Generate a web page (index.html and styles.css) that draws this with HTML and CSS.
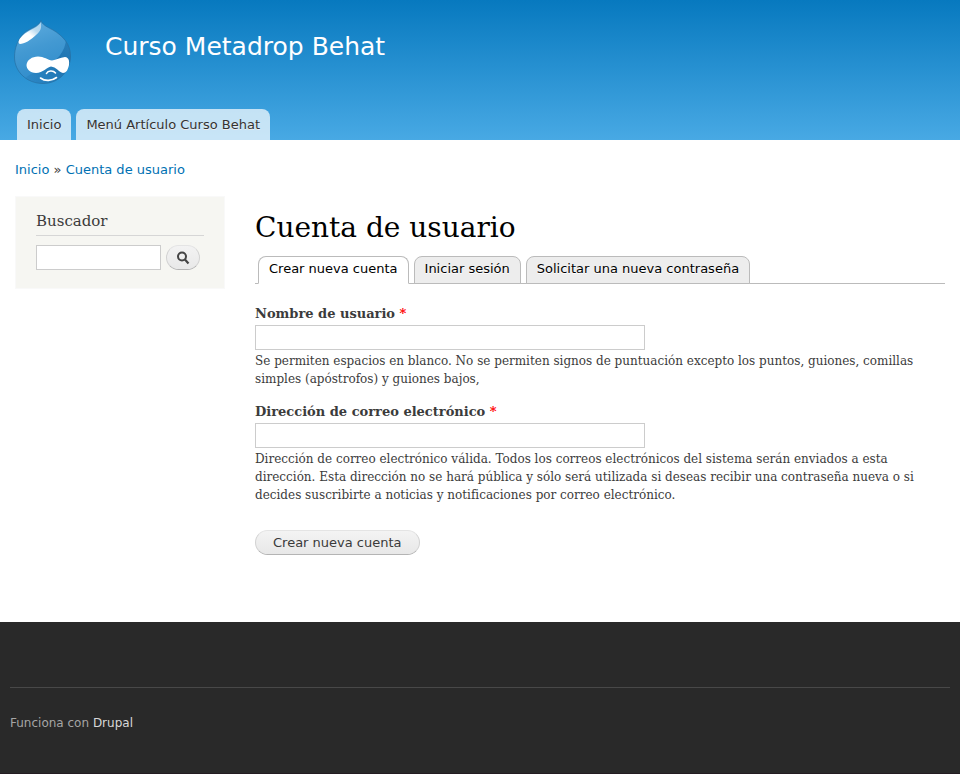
FILE: index.html
```html
<!DOCTYPE html>
<html lang="es">
<head>
<meta charset="utf-8">
<meta name="viewport" content="width=device-width, initial-scale=1">
<title>Cuenta de usuario | Curso Metadrop Behat</title>
<link rel="stylesheet" href="styles.css">
</head>
<body>
<header class="site-header">
  <div class="branding">
    <a class="logo" href="#" aria-label="Inicio">
      <svg width="58" height="65" viewBox="0 0 58 65" aria-hidden="true">
        <defs>
          <linearGradient id="drop" x1="0" y1="0" x2="0.3" y2="1">
            <stop offset="0" stop-color="#62aee0"/>
            <stop offset="0.5" stop-color="#4399d2"/>
            <stop offset="1" stop-color="#2f8ccb"/>
          </linearGradient>
          <linearGradient id="dark" x1="1" y1="0" x2="0" y2="1">
            <stop offset="0" stop-color="#1b70ad" stop-opacity="0.6"/>
            <stop offset="0.4" stop-color="#1b70ad" stop-opacity="0.85"/>
            <stop offset="1" stop-color="#1b70ad" stop-opacity="0.1"/>
          </linearGradient>
          <linearGradient id="shine" x1="1" y1="0" x2="0.2" y2="1">
            <stop offset="0" stop-color="#ffffff" stop-opacity="0.5"/>
            <stop offset="0.35" stop-color="#ffffff" stop-opacity="0.6"/>
            <stop offset="0.6" stop-color="#ffffff"/>
            <stop offset="1" stop-color="#ffffff"/>
          </linearGradient>
          <clipPath id="drop-clip">
            <path d="M27 .5C28 4 31 6 39 10C49 16 56.500 24 56.500 36C56.500 52 44 63.500 29 63.500C13 63.500 .5 52 .5 37C.5 28 4 19 10 13C16 8 26 6 27 .5Z"/>
          </clipPath>
        </defs>
        <path fill="url(#drop)" d="M27 .5C28 4 31 6 39 10C49 16 56.500 24 56.500 36C56.500 52 44 63.500 29 63.500C13 63.500 .5 52 .5 37C.5 28 4 19 10 13C16 8 26 6 27 .5Z"/>
        <g clip-path="url(#drop-clip)">
          <path fill="url(#dark)" d="M52 18C52 32 42 42 28 49C20 52 14 55 10 59L30 65L58 60V20Z"/>
        </g>
        <path fill="none" stroke="#256a9c" stroke-opacity=".6" d="M27 .5C28 4 31 6 39 10C49 16 56.500 24 56.500 36C56.500 52 44 63.500 29 63.500C13 63.500 .5 52 .5 37C.5 28 4 19 10 13C16 8 26 6 27 .5Z"/>
        <path fill="url(#shine)" d="M26.500 2C28 7 27 11 22 15C17 20 10 24 6 24C3 23 5 18 11 13.500C17 9 25 7 26.500 2Z"/>
        <path fill="#fff" d="M24 36.500C30 36.500 34 40 38 40.500C42 40 46 37.500 51 37C55 37.500 55.500 41 55 45C54 50 52 53 49 53C45 52 42 47 37 46.500C33 47 29 53 22 53C16 53 12.500 49 12.500 45C13 40 18 36.500 24 36.500Z"/>
        <path fill="none" stroke="#fff" stroke-width="1.600" stroke-linecap="round" d="M32.500 53.500C34 50.500 39 50 41.500 53M26.500 58C31 61.500 38 61 42.500 57.500"/>
      </svg>
    </a>
    <a class="site-name" href="#">Curso Metadrop Behat</a>
  </div>
  <nav class="main-menu" aria-label="Menú principal">
    <a href="#">Inicio</a>
    <a href="#">Menú Artículo Curso Behat</a>
  </nav>
</header>
<div class="page">
  <nav class="breadcrumb" aria-label="Ruta"><a href="#">Inicio</a> » <a href="#">Cuenta de usuario</a></nav>
  <div class="columns">
    <aside class="sidebar">
      <h2>Buscador</h2>
      <form class="search" role="search">
        <input type="text" aria-label="Buscar">
        <button class="button" type="button" aria-label="Buscar">
          <svg width="14" height="14" viewBox="0 0 14 14" fill="none" stroke="#444" aria-hidden="true">
            <circle cx="6" cy="5.500" r="4" stroke-width="2"/>
            <path d="M8.500 8l4 4.500" stroke-width="2.200"/>
          </svg>
        </button>
      </form>
    </aside>
    <main class="content">
      <h1>Cuenta de usuario</h1>
      <nav class="tabs" aria-label="Solapas principales">
        <a class="active" href="#" aria-current="page">Crear nueva cuenta</a>
        <a href="#">Iniciar sesión</a>
        <a href="#">Solicitar una nueva contraseña</a>
      </nav>
      <form class="account">
        <div class="field">
          <label for="name">Nombre de usuario <span class="required">*</span></label>
          <input id="name" type="text" aria-describedby="name-help">
          <p id="name-help">Se permiten espacios en blanco. No se permiten signos de puntuación excepto los puntos, guiones, comillas simples (apóstrofos) y guiones bajos,</p>
        </div>
        <div class="field">
          <label for="mail">Dirección de correo electrónico <span class="required">*</span></label>
          <input id="mail" type="text" aria-describedby="mail-help">
          <p id="mail-help">Dirección de correo electrónico válida. Todos los correos electrónicos del sistema serán enviados a esta dirección. Esta dirección no se hará pública y sólo será utilizada si deseas recibir una contraseña nueva o si decides suscribirte a noticias y notificaciones por correo electrónico.</p>
        </div>
        <button class="button submit" type="button">Crear nueva cuenta</button>
      </form>
    </main>
  </div>
</div>
<footer class="site-footer">
  <p>Funciona con <a href="#">Drupal</a></p>
</footer>
</body>
</html>
```
FILE: styles.css
```css
* {
  box-sizing: border-box;
}

body {
  margin: 0;
  min-height: 100vh;
  display: flex;
  flex-direction: column;
  background: #292929;
  color: #3b3b3b;
  font: 13px/20px "DejaVu Sans", Verdana, sans-serif;
}

a {
  color: #0071b3;
  text-decoration: none;
}

h1,
h2,
p {
  margin: 0;
}

.site-header {
  padding: 20px 14px 0;
  background: linear-gradient(#0779bf, #48a9e4);
}

.branding {
  display: flex;
  align-items: flex-start;
  gap: 33px;
}

.logo svg {
  display: block;
}

.site-name {
  padding-top: 11px;
  color: #fffeff;
  font-size: 25px;
  line-height: 32px;
}

.main-menu {
  display: flex;
  gap: 5px;
  padding: 24px 3px 0;
}

.main-menu a {
  padding: 6px 10px 5px;
  border-radius: 8px 8px 0 0;
  background: rgba(255, 255, 255, 0.7);
  color: #333;
  text-shadow: 0 1px #eee;
}

.page {
  padding: 20px 15px 67px;
  background: #fff;
}

.columns {
  display: flex;
  align-items: flex-start;
  gap: 30px;
  margin-top: 16px;
}

.sidebar {
  flex: 0 0 210px;
  padding: 14px 20px 18px;
  border: 1px solid #f9f9f9;
  background: #f6f6f2;
}

.sidebar h2 {
  padding-bottom: 4px;
  border-bottom: 1px solid #d6d6d6;
  font: 15px/20px "DejaVu Serif", Georgia, serif;
}

.search {
  display: flex;
  gap: 5px;
  margin-top: 9px;
}

input {
  height: 25px;
  padding: 2px 4px;
  border: 1px solid #ccc;
  border-radius: 0;
  background: #fff;
  color: #3b3b3b;
  font: inherit;
}

.search input {
  width: 125px;
}

.button {
  height: 25px;
  padding: 0 17px;
  border: 1px solid #e4e4e4;
  border-bottom-color: #b4b4b4;
  border-left-color: #d2d2d2;
  border-right-color: #d2d2d2;
  border-radius: 13px;
  background: linear-gradient(#f3f3f3, #e8e8e8);
  color: #3a3a3a;
  font: inherit;
}

.search .button {
  display: grid;
  place-items: center;
  width: 34px;
  padding: 0;
}

.content {
  flex: 1;
  min-width: 0;
  padding-top: 14px;
}

h1 {
  color: #000;
  font: 28px/36px "DejaVu Serif", Georgia, serif;
}

.tabs {
  display: flex;
  gap: 5px;
  margin-top: 10px;
  padding: 0 3px;
  box-shadow: inset 0 -1px #bbb;
}

.tabs a {
  padding: 2px 10px 4px;
  border: 1px solid #bbb;
  border-radius: 8px 8px 0 0;
  background: #ededed;
  color: #000;
  text-shadow: 0 1px #fff;
}

.tabs .active {
  border-bottom-color: #fff;
  background: #fff;
}

.account {
  margin-top: 20px;
  font-family: "DejaVu Serif", Georgia, serif;
}

.field {
  margin-bottom: 14px;
}

.field label {
  display: block;
  margin-bottom: 1px;
  font-weight: bold;
}

.required {
  color: #f00;
}

.field input {
  display: block;
  width: 390px;
  max-width: 100%;
}

.field p {
  margin-top: 2px;
  font-size: 12px;
  line-height: 18px;
}

.submit {
  margin-top: 12px;
  font-family: "DejaVu Sans", Verdana, sans-serif;
}

.site-footer {
  flex: 1;
  padding: 65px 10px 0;
  border-bottom: 1px solid #231c21;
  background: #292929;
  color: #a5a5a5;
  font-size: 12px;
}

.site-footer p {
  padding-top: 25px;
  border-top: 1px solid #484848;
}

.site-footer a {
  color: #d8d8d8;
}
```
